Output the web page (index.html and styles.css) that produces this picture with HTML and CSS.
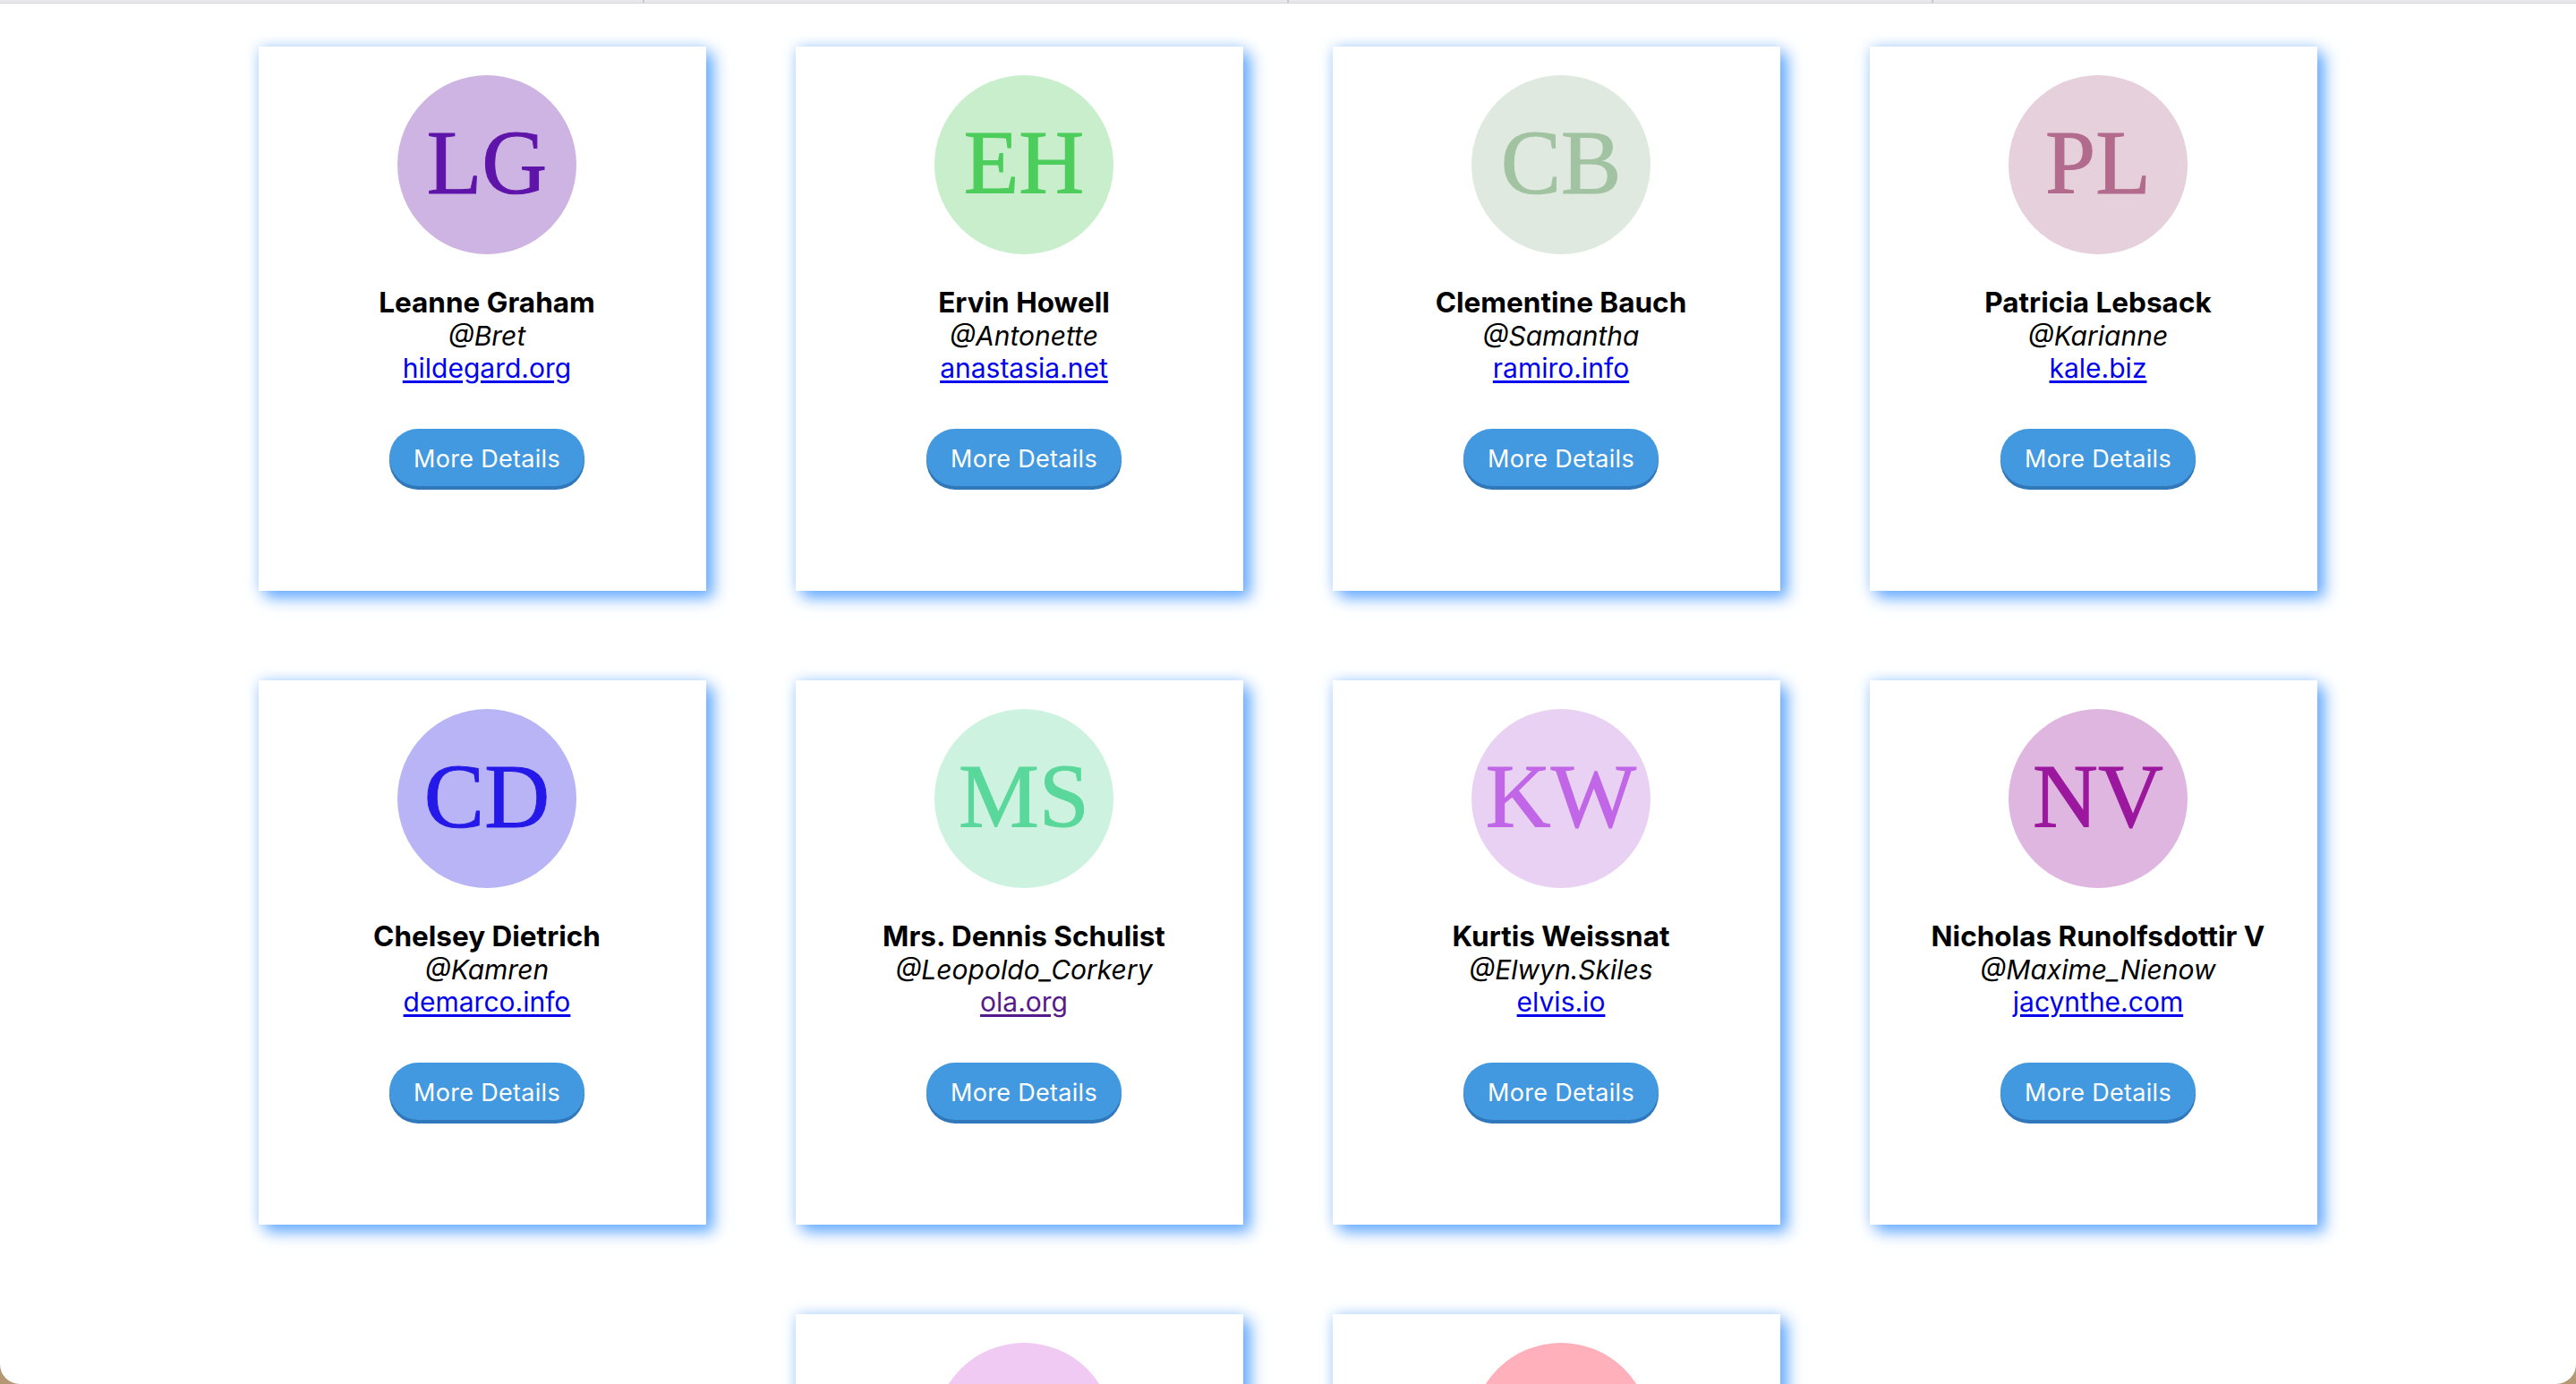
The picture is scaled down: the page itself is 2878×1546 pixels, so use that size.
FILE: index.html
```html
<!DOCTYPE html>
<html lang="en">
<head>
<meta charset="utf-8">
<title>Users</title>
<link rel="stylesheet" href="styles.css">
</head>
<body>
<div class="tabstrip"><span class="tab"></span><span class="tab"></span><span class="tab"></span><span class="tab last"></span></div>
<main class="grid">
  <section class="card">
    <div class="avatar av-lg">LG</div>
    <div class="info">
      <div class="name">Leanne Graham</div>
      <div class="handle">@Bret</div>
      <a class="site" href="#">hildegard.org</a>
    </div>
    <button class="more">More Details</button>
  </section>
  <section class="card">
    <div class="avatar av-eh">EH</div>
    <div class="info">
      <div class="name">Ervin Howell</div>
      <div class="handle">@Antonette</div>
      <a class="site" href="#">anastasia.net</a>
    </div>
    <button class="more">More Details</button>
  </section>
  <section class="card">
    <div class="avatar av-cb">CB</div>
    <div class="info">
      <div class="name">Clementine Bauch</div>
      <div class="handle">@Samantha</div>
      <a class="site" href="#">ramiro.info</a>
    </div>
    <button class="more">More Details</button>
  </section>
  <section class="card">
    <div class="avatar av-pl">PL</div>
    <div class="info">
      <div class="name">Patricia Lebsack</div>
      <div class="handle">@Karianne</div>
      <a class="site" href="#">kale.biz</a>
    </div>
    <button class="more">More Details</button>
  </section>
  <section class="card">
    <div class="avatar av-cd">CD</div>
    <div class="info">
      <div class="name">Chelsey Dietrich</div>
      <div class="handle">@Kamren</div>
      <a class="site" href="#">demarco.info</a>
    </div>
    <button class="more">More Details</button>
  </section>
  <section class="card">
    <div class="avatar av-ms">MS</div>
    <div class="info">
      <div class="name">Mrs. Dennis Schulist</div>
      <div class="handle">@Leopoldo_Corkery</div>
      <a class="site visited" href="#">ola.org</a>
    </div>
    <button class="more">More Details</button>
  </section>
  <section class="card">
    <div class="avatar av-kw">KW</div>
    <div class="info">
      <div class="name">Kurtis Weissnat</div>
      <div class="handle">@Elwyn.Skiles</div>
      <a class="site" href="#">elvis.io</a>
    </div>
    <button class="more">More Details</button>
  </section>
  <section class="card">
    <div class="avatar av-nv">NV</div>
    <div class="info">
      <div class="name">Nicholas Runolfsdottir V</div>
      <div class="handle">@Maxime_Nienow</div>
      <a class="site" href="#">jacynthe.com</a>
    </div>
    <button class="more">More Details</button>
  </section>
  <section class="card">
    <div class="avatar av-gr">GR</div>
    <div class="info">
      <div class="name">Glenna Reichert</div>
      <div class="handle">@Delphine</div>
      <a class="site" href="#">conrad.com</a>
    </div>
    <button class="more">More Details</button>
  </section>
  <section class="card">
    <div class="avatar av-cd2">CD</div>
    <div class="info">
      <div class="name">Clementina DuBuque</div>
      <div class="handle">@Moriah.Stanton</div>
      <a class="site" href="#">ambrose.net</a>
    </div>
    <button class="more">More Details</button>
  </section>
</main>
<div class="window-frame"></div>
</body>
</html>
```
FILE: styles.css
```css
html, body {
  margin: 0;
  padding: 0;
  height: 100%;
  overflow: hidden;
  background: #ffffff;
}

body {
  font-family: Inter, "Noto Sans", "Liberation Sans", sans-serif;
  color: #000;
}

.tabstrip {
  display: flex;
  height: 3px;
  background: #e8e8ec;
  border-bottom: 1px solid #d6d6da;
}

.tab {
  flex: 1;
  border-right: 2px solid #c9c9ce;
}

.tab.last {
  border-right: none;
}

.grid {
  width: 2300px;
  margin: 48px auto 0;
  display: flex;
  flex-wrap: wrap;
  justify-content: center;
  gap: 100px;
}

.card {
  width: 490px;
  height: 576px;
  padding: 32px 0 0 10px;
  background: #ffffff;
  box-shadow: 8px 8px 16px rgba(96, 168, 255, 0.95), 0 0 14px rgba(120, 180, 255, 0.45);
  display: flex;
  flex-direction: column;
  align-items: center;
}

.avatar {
  width: 200px;
  height: 200px;
  border-radius: 50%;
  display: flex;
  align-items: center;
  justify-content: center;
  font-family: "Liberation Serif", "DejaVu Serif", serif;
  font-size: 101px;
  line-height: 1;
  padding-bottom: 4px;
  box-sizing: border-box;
  -webkit-text-stroke: 1px currentColor;
}

.av-lg { background: #ceb4e2; color: #5e13a9; }
.av-eh { background: #c8eecb; color: #4ccd5c; }
.av-cb { background: #dfe9df; color: #a1c3a1; }
.av-pl { background: #e6d0db; color: #b26b8c; }
.av-cd { background: #b8b4f5; color: #2419e8; }
.av-ms { background: #cdf2df; color: #5ad89b; }
.av-kw { background: #e9d1f4; color: #c066e6; }
.av-nv { background: #dfb6e0; color: #9b189e; }
.av-gr { background: #f0caf3; color: #c94fd2; }
.av-cd2 { background: #ffb0bb; color: #e8304a; }

.info {
  margin-top: 36px;
  display: flex;
  flex-direction: column;
  align-items: center;
  font-size: 30px;
  line-height: 36.5px;
}

.name {
  font-weight: 700;
  font-size: 31.5px;
}

.handle {
  font-style: italic;
}

.site {
  color: #0000ee;
  text-decoration: underline;
  text-underline-offset: 3px;
}

.site.visited {
  color: #551a8b;
}

.more {
  margin-top: 49px;
  height: 64px;
  padding: 4px 27px 0;
  border: none;
  border-radius: 32px;
  background: #4299e0;
  box-shadow: 0 4px 0 #3078ba;
  color: #ffffff;
  font-family: Inter, "Noto Sans", "Liberation Sans", sans-serif;
  font-size: 27px;
  letter-spacing: 0.3px;
}

.window-frame {
  position: fixed;
  inset: 0;
  border-radius: 0 0 22px 22px;
  box-shadow: 0 0 0 40px #b39873;
  pointer-events: none;
}
```
